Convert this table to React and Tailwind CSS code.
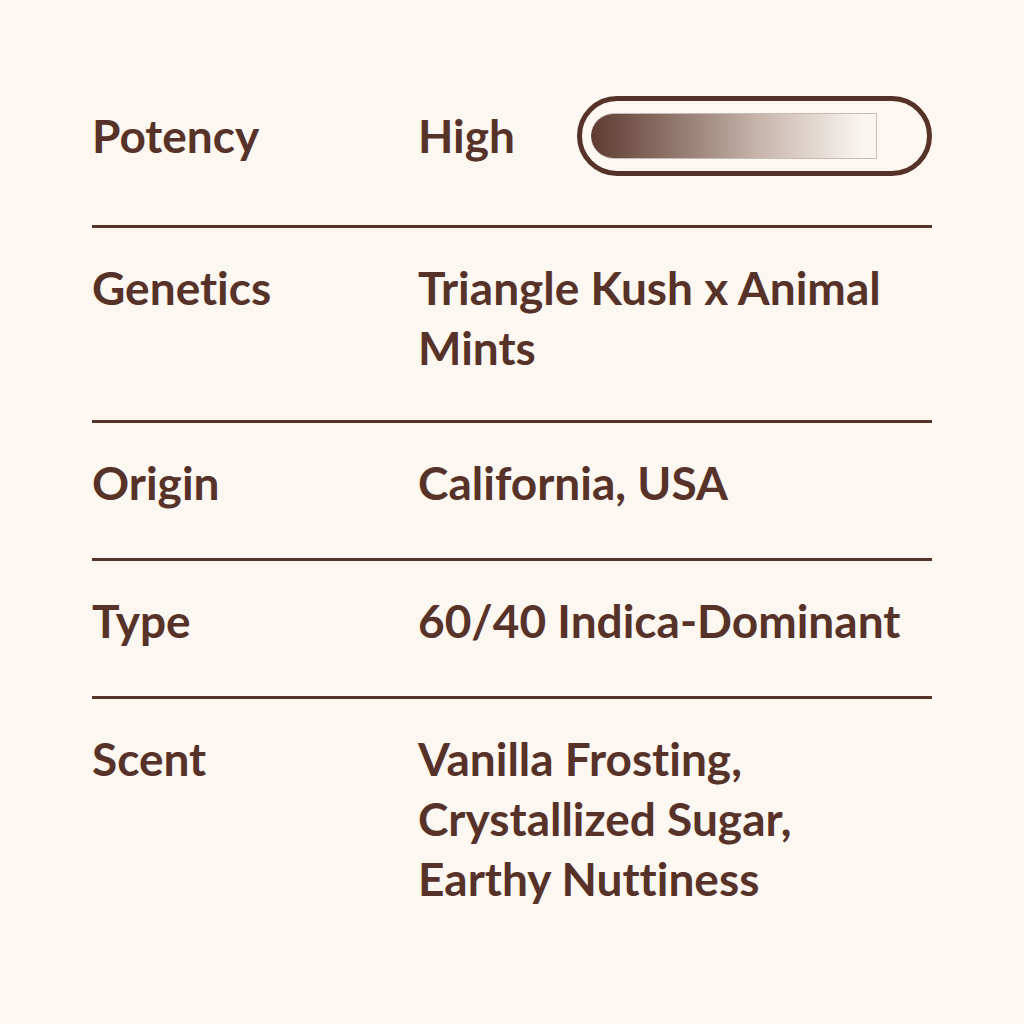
export default function App() {
  const rows = [
    { label: "Genetics", value: ["Triangle Kush x Animal", "Mints"], pb: "pb-[42px]" },
    { label: "Origin", value: ["California, USA"], pb: "pb-[45px]" },
    { label: "Type", value: ["60/40 Indica-Dominant"], pb: "pb-[45px]" },
    { label: "Scent", value: ["Vanilla Frosting,", "Crystallized Sugar,", "Earthy Nuttiness"], pb: "pb-[45px]" },
  ];
  return (
    <div
      className="w-[1024px] h-[1024px] bg-[#fcf7f1] text-[#573229] overflow-hidden [font-variant-ligatures:none]"
      style={{ fontFamily: "Lato, 'Noto Sans', sans-serif" }}
    >
      <div className="ml-[92px] w-[840px] flex flex-col">
        <div className="pt-[96px] pb-[49px] grid grid-cols-[326px_1fr] items-center">
          <div className="text-[46px] font-bold leading-[60px]">Potency</div>
          <div className="flex items-center justify-between">
            <div className="text-[46px] font-bold leading-[60px]">High</div>
            <div className="w-[355px] h-[80px] rounded-full border-[5px] border-[#573229] flex items-center pl-[9px]">
              <div className="w-[286px] h-[46px] rounded-l-full border-r border-y border-[#c9bbb5] bg-[linear-gradient(to_right,#5e3b31_0%,#9b8278_35%,#c9b7ae_60%,#f9f5f1_95%)]"></div>
            </div>
          </div>
        </div>
        {rows.map((r) => (
          <div key={r.label} className={`border-t-[3px] border-[#573229] pt-[30px] grid grid-cols-[326px_1fr] ${r.pb}`}>
            <div className="text-[46px] font-bold leading-[60px]">{r.label}</div>
            <div className="text-[46px] font-bold leading-[60px]">
              {r.value.map((v) => (
                <div key={v}>{v}</div>
              ))}
            </div>
          </div>
        ))}
      </div>
    </div>
  );
}
